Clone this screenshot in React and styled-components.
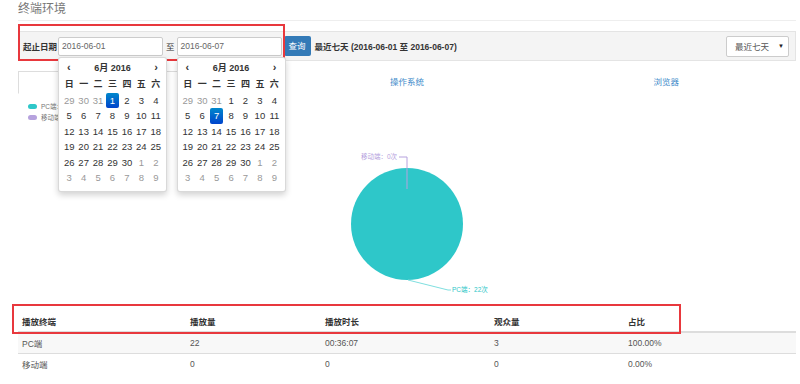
import React from "react";
import styled, { createGlobalStyle } from "styled-components";

const GlobalStyle = createGlobalStyle`
  body {
    margin: 0;
    background: #fff;
    font-family: "Liberation Sans", "Noto Sans CJK SC", sans-serif;
    font-size: 8.5px;
    color: #555;
  }
`;

const weekDays = ["日", "一", "二", "三", "四", "五", "六"];

const buildDays = () => {
  const list = [29, 30, 31].map((d) => ({ d, muted: true }));
  for (let i = 1; i <= 30; i++) list.push({ d: i, muted: false });
  for (let i = 1; i <= 9; i++) list.push({ d: i, muted: true });
  return list;
};

const Calendar = ({ active }) => {
  const days = buildDays();
  return (
    <Dropdown>
      <CalHead>
        <Arrow>‹</Arrow>
        <Month>6月 2016</Month>
        <Arrow>›</Arrow>
      </CalHead>
      <CalGrid>
        {weekDays.map((w) => (
          <WeekCell key={w}>{w}</WeekCell>
        ))}
        {days.map((c, i) => (
          <DayCell key={i} $muted={c.muted} $active={!c.muted && c.d === active}>
            {c.d}
          </DayCell>
        ))}
      </CalGrid>
    </Dropdown>
  );
};

const tableRows = [
  ["PC端", "22", "00:36:07", "3", "100.00%"],
  ["移动端", "0", "0", "0", "0.00%"],
];

const App = () => {
  return (
    <>
      <GlobalStyle />
      <Page>
        <Title>终端环境</Title>
        <Toolbar>
          <FilterGroup>
            <Label>起止日期</Label>
            <DateWrap>
              <DateInput>2016-06-01</DateInput>
              <Calendar active={1} />
            </DateWrap>
            <Sep>至</Sep>
            <DateWrap>
              <DateInput>2016-06-07</DateInput>
              <Calendar active={7} />
            </DateWrap>
            <RedFrame />
          </FilterGroup>
          <QueryBtn>查询</QueryBtn>
          <Range>最近七天 (2016-06-01 至 2016-06-07)</Range>
          <Select>
            <span>最近七天</span>
            <Caret>▼</Caret>
          </Select>
        </Toolbar>

        <Tabs>
          <Tab $active>终端</Tab>
          <Tab>操作系统</Tab>
          <Tab>浏览器</Tab>
        </Tabs>

        <Chart>
          <svg width="778" height="206" viewBox="0 0 778 206">
            <rect x="10" y="10" width="9" height="5" rx="2.5" fill="#2ec7c9" />
            <text x="23" y="15" fontSize="6.5" fill="#777">PC端：22次</text>
            <rect x="10" y="21" width="9" height="5" rx="2.5" fill="#b6a2de" />
            <text x="23" y="26" fontSize="6.5" fill="#777">移动端：0次</text>

            <circle cx="389" cy="130" r="56" fill="#2ec7c9" />
            <polyline
              points="381,63 389,63 389,95"
              fill="none"
              stroke="#b6a2de"
              strokeWidth="1"
            />
            <text x="379" y="65" fontSize="6.5" fill="#b6a2de" textAnchor="end">
              移动端：0次
            </text>
            <polyline
              points="390,186 430,196 433,196"
              fill="none"
              stroke="#7fdfe0"
              strokeWidth="1"
            />
            <text x="434" y="198" fontSize="6.5" fill="#2ec7c9">PC端：22次</text>
          </svg>
        </Chart>

        <TableWrap>
          <Table>
            <thead>
              <tr>
                <Th $w={160}>播放终端</Th>
                <Th $w={127}>播放量</Th>
                <Th $w={161}>播放时长</Th>
                <Th $w={126}>观众量</Th>
                <Th>占比</Th>
              </tr>
            </thead>
            <tbody>
              {tableRows.map((r, i) => (
                <Tr key={i} $striped={i === 0}>
                  {r.map((c, j) => (
                    <Td key={j}>{c}</Td>
                  ))}
                </Tr>
              ))}
            </tbody>
          </Table>
          <TableFrame />
        </TableWrap>
      </Page>
    </>
  );
};

export default App;

const Page = styled.div`
  width: 778px;
  padding: 0 4px 0 18px;
`;

const Title = styled.div`
  height: 20px;
  line-height: 18px;
  font-size: 12px;
  color: #777;
  border-bottom: 1px solid #eee;
`;

///////Toolbar//////////
const Toolbar = styled.div`
  margin-top: 10px;
  height: 28px;
  display: flex;
  align-items: center;
  background: #f4f4f4;
  border: 1px solid #e4e4e4;
`;

const FilterGroup = styled.div`
  position: relative;
  display: flex;
  align-items: center;
  padding-left: 4px;
  height: 100%;
`;

const RedFrame = styled.div`
  position: absolute;
  left: -1px;
  top: -8px;
  width: 263px;
  height: 33px;
  border: 2px solid #e8383d;
  pointer-events: none;
`;

const Label = styled.span`
  font-weight: bold;
  color: #333;
  margin-right: 1px;
`;

const DateWrap = styled.div`
  position: relative;
`;

const DateInput = styled.div`
  width: 100px;
  height: 17px;
  line-height: 17px;
  padding-left: 3px;
  border: 1px solid #ccc;
  border-radius: 2px;
  background: #fff;
  color: #666;
`;

const Sep = styled.span`
  color: #333;
  margin: 0 2px 0 3px;
`;

const QueryBtn = styled.div`
  margin-left: 2px;
  width: 27px;
  height: 20px;
  line-height: 20px;
  text-align: center;
  background: #337ab7;
  border-radius: 2px;
  color: #fff;
`;

const Range = styled.span`
  margin-left: 4px;
  font-weight: bold;
  color: #333;
`;

const Select = styled.div`
  margin-left: auto;
  margin-right: 6px;
  width: 49px;
  height: 19px;
  padding: 0 4px 0 8px;
  display: flex;
  align-items: center;
  justify-content: space-between;
  background: #fff;
  border: 1px solid #ccc;
  border-radius: 2px;
  color: #555;
`;

const Caret = styled.span`
  font-size: 6px;
  color: #222;
`;

///////Calendar//////////
const Dropdown = styled.div`
  position: absolute;
  left: 0;
  top: 20px;
  z-index: 10;
  width: 101px;
  padding: 2px 3px 5px;
  background: #fff;
  border: 1px solid rgba(0, 0, 0, 0.15);
  border-radius: 3px;
  box-shadow: 0 3px 6px rgba(0, 0, 0, 0.18);
`;

const CalHead = styled.div`
  display: flex;
  align-items: center;
  justify-content: space-between;
  height: 15px;
  padding: 0 5px;
  color: #333;
`;

const Arrow = styled.span`
  font-size: 11px;
  font-weight: bold;
`;

const Month = styled.span`
  font-weight: bold;
  font-size: 9px;
`;

const CalGrid = styled.div`
  display: grid;
  grid-template-columns: repeat(7, 1fr);
  grid-template-rows: 18px;
  grid-auto-rows: 15.6px;
  text-align: center;
  font-size: 9.5px;
`;

const WeekCell = styled.div`
  line-height: 18px;
  font-size: 9px;
  font-weight: bold;
  color: #333;
`;

const DayCell = styled.div`
  line-height: 15.6px;
  margin: 0 0.5px;
  border-radius: 2px;
  color: ${(p) => (p.$active ? "#fff" : p.$muted ? "#999" : "#333")};
  background: ${(p) =>
    p.$active ? "linear-gradient(to bottom, #0088cc, #0044cc)" : "none"};
`;

///////Tabs//////////
const Tabs = styled.div`
  margin-top: 10px;
  display: grid;
  grid-template-columns: repeat(3, 1fr);
  border-bottom: 1px solid #ddd;
`;

const Tab = styled.div`
  height: 21px;
  line-height: 21px;
  text-align: center;
  color: #428bca;
  margin-bottom: -1px;
  background: #fff;
  border: 1px solid ${(p) => (p.$active ? "#ddd" : "transparent")};
  border-bottom-color: ${(p) => (p.$active ? "#fff" : "transparent")};
`;

const Chart = styled.div`
  height: 206px;
`;

///////Table//////////
const TableWrap = styled.div`
  position: relative;
  margin-top: 10px;
`;

const TableFrame = styled.div`
  position: absolute;
  left: -6px;
  top: -6px;
  width: 665px;
  height: 26px;
  border: 2px solid #e8383d;
  pointer-events: none;
`;

const Table = styled.table`
  width: 778px;
  border-collapse: collapse;
  table-layout: fixed;
`;

const Th = styled.th`
  width: ${(p) => (p.$w ? `${p.$w}px` : "auto")};
  text-align: left;
  padding: 4px 4px 3px;
  height: 14px;
  color: #333;
  border-bottom: 2px solid #ddd;
`;

const Tr = styled.tr`
  background: ${(p) => (p.$striped ? "#f8f8f8" : "#fff")};
  border-bottom: 1px solid ${(p) => (p.$striped ? "#ddd" : "transparent")};
`;

const Td = styled.td`
  padding: 0 4px;
  height: 20px;
  color: #555;
`;
